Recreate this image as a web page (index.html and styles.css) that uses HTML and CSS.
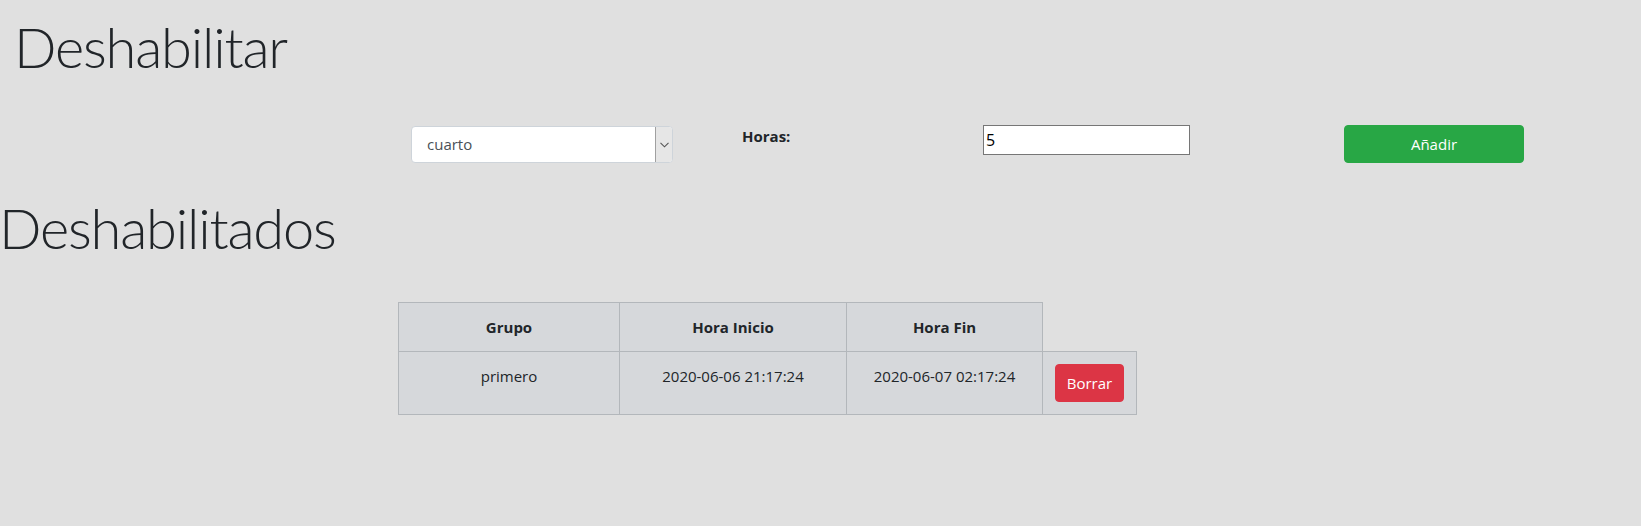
FILE: index.html
```html
<!DOCTYPE html>
<html lang="es">
<head>
<meta charset="utf-8">
<title>Deshabilitar</title>
<link rel="stylesheet" href="styles.css">
</head>
<body>
<h1 class="title title-first">Deshabilitar</h1>
<form class="form-row">
  <div class="select">
    <span class="select-value">cuarto</span>
    <span class="select-arrow">
      <svg width="9" height="6" viewBox="0 0 9 6"><path d="M0.5 0.8 L4.5 4.8 L8.5 0.8" fill="none" stroke="#555" stroke-width="1.1"/></svg>
    </span>
  </div>
  <label class="label">Horas:</label>
  <input class="input" type="text" value="5">
  <button class="btn btn-success" type="button">Añadir</button>
</form>
<h1 class="title title-second">Deshabilitados</h1>
<table class="table">
  <thead>
    <tr>
      <th class="c1">Grupo</th>
      <th class="c2">Hora Inicio</th>
      <th class="c3">Hora Fin</th>
    </tr>
  </thead>
  <tbody>
    <tr>
      <td>primero</td>
      <td>2020-06-06 21:17:24</td>
      <td>2020-06-07 02:17:24</td>
      <td class="c4"><button class="btn btn-danger" type="button">Borrar</button></td>
    </tr>
  </tbody>
</table>
</body>
</html>
```
FILE: styles.css
```css
html, body {
  margin: 0;
  padding: 0;
}
body {
  background: #e0e0e0;
  font-family: "Open Sans", "Noto Sans", sans-serif;
  font-size: 16px;
  line-height: 1.5;
  color: #212529;
  width: 1641px;
  height: 526px;
  overflow: hidden;
}
.title {
  font-family: Lato, "Open Sans", sans-serif;
  font-weight: 300;
  font-size: 56px;
  line-height: 1.2;
  letter-spacing: -1.2px;
  margin: 0;
  color: #212529;
}
.title-first {
  margin-left: 14px;
  padding-top: 13px;
}
.title-second {
  margin-left: -1px;
  margin-top: 31px;
}
.form-row {
  display: flex;
  align-items: flex-start;
  margin-top: 46px;
  height: 37px;
}
.select {
  margin-left: 411px;
  width: 262px;
  height: 37px;
  box-sizing: border-box;
  display: flex;
  background: #fff;
  border: 1px solid #ced4da;
  border-radius: 4px;
  overflow: hidden;
}
.select-value {
  flex: 1;
  padding-left: 15px;
  line-height: 35px;
  color: #495057;
  font-size: 15px;
}
.select-arrow {
  width: 16px;
  display: flex;
  align-items: center;
  justify-content: center;
  background: #e6e6e6;
  border-left: 1px solid #a0a0a0;
}
.label {
  margin-left: 69px;
  margin-top: -1px;
  font-weight: 700;
  font-size: 15px;
  width: 241px;
  flex: none;
}
.input {
  flex: none;
  width: 207px;
  height: 30px;
  box-sizing: border-box;
  border: 1px solid #767676;
  padding: 0 2px;
  font-family: "Open Sans", sans-serif;
  font-size: 16px;
  color: #000;
  background: #fff;
  margin: -1px 0 0 0;
}
.btn {
  font-family: "Open Sans", sans-serif;
  font-size: 15px;
  color: #fff;
  border: 1px solid transparent;
  border-radius: 4px;
  box-sizing: border-box;
  height: 38px;
  padding: 0;
}
.btn-success {
  flex: none;
  margin-left: 154px;
  margin-top: -1px;
  width: 180px;
  background: #28a745;
  border-color: #28a745;
}
.btn-danger {
  width: 69px;
  background: #dc3545;
  border-color: #dc3545;
  display: block;
}
.table {
  margin-left: 398px;
  margin-top: 41px;
  border-collapse: collapse;
  font-size: 15px;
}
.table th, .table td {
  background: #d6d8db;
  border: 1px solid #b3b7bb;
  padding: 12px;
  text-align: center;
  vertical-align: top;
  line-height: 24px;
  box-sizing: border-box;
}
.table th {
  font-weight: 700;
}
.c1 { width: 221px; }
.c2 { width: 227px; }
.c3 { width: 196px; }
.table td.c4 { width: 94px; }
```
